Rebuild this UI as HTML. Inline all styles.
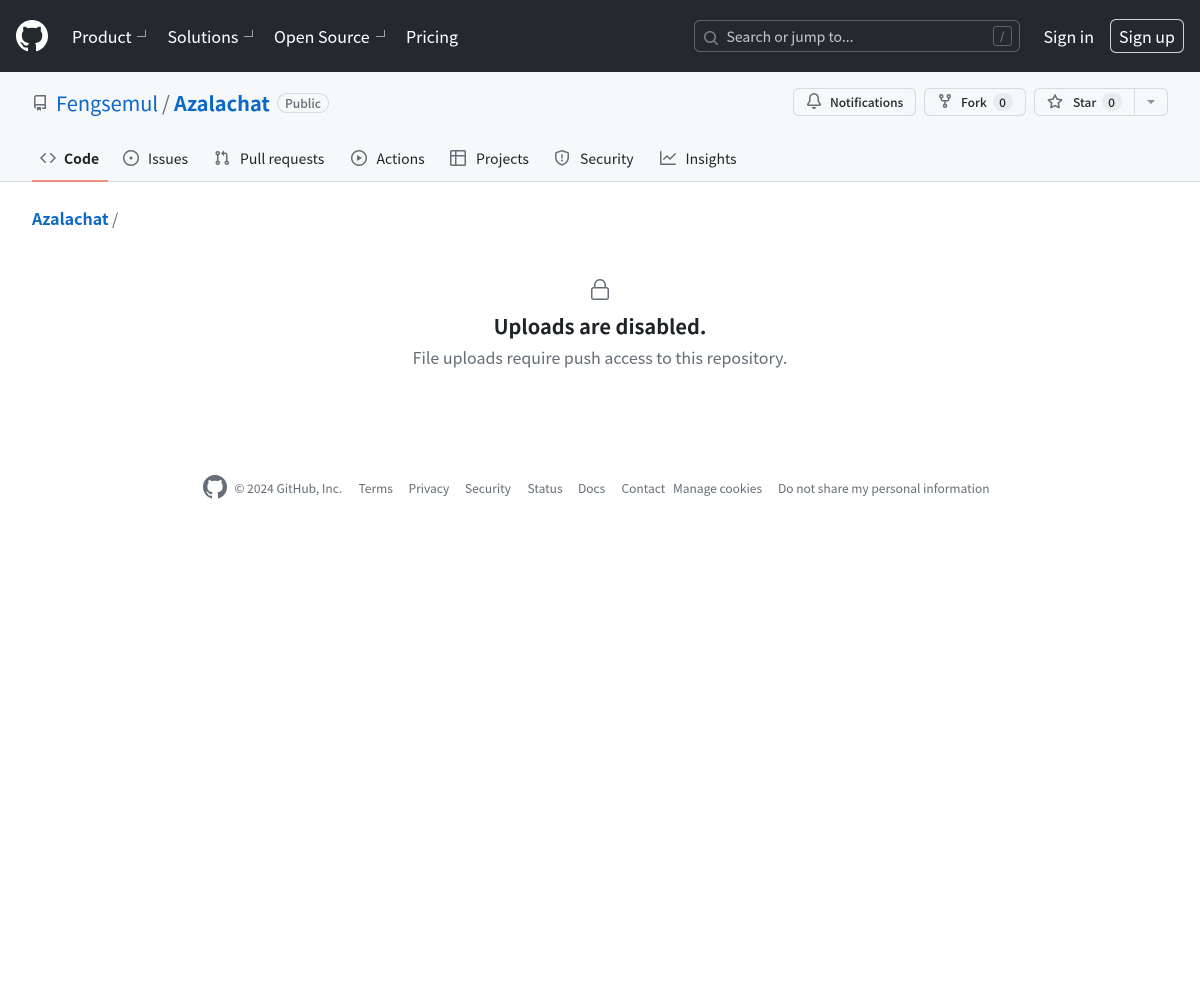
<!DOCTYPE html>
<html lang="en">
<head>
<meta charset="utf-8">
<title>Azalachat</title>
<style>
html,body{margin:0;padding:0;width:1200px;height:1000px;background:#fff;overflow:hidden}
body{font-family:"Noto Sans CJK SC","Noto Sans CJK JP",sans-serif;color:#1f2328;position:relative}
.a{position:absolute;white-space:nowrap;line-height:24px}
svg{position:absolute;fill:currentColor;display:block}
.hd{position:absolute;left:0;top:0;width:1200px;height:72px;background:#24292f}
.sub{position:absolute;left:0;top:72px;width:1200px;height:110px;background:#f6f8fa;border-bottom:1px solid #d8dee4;box-sizing:border-box}
.nav{font-size:16px;color:#fff;top:24px}
.ch{position:absolute;width:8px;height:6px;border-right:1.5px solid #a0a3a6;border-bottom:1.5px solid #a0a3a6;top:30px;box-sizing:content-box}
.tab{font-size:14px;color:#1f2328;top:147px}
.ic{color:#656d76}
.btn{position:absolute;top:88px;height:28px;box-sizing:border-box;background:#f6f8fa;border:1px solid #d5dbe1;border-radius:6px}
.bt{font-size:12px;font-weight:500;color:#24292f;top:91px}
.cnt{position:absolute;top:93px;height:18px;width:20px;border-radius:10px;background:#e9ecef;font-size:12px;line-height:19px;text-align:center;color:#24292f;font-weight:500}
.ft{font-size:12px;color:#656d76;top:477px}
</style>
</head>
<body>
<div class="hd"></div>
<svg style="left:16px;top:20px;color:#fff" width="32" height="32" viewBox="0 0 16 16"><path d="M8 0c4.42 0 8 3.58 8 8a8.013 8.013 0 0 1-5.45 7.59c-.4.08-.55-.17-.55-.38 0-.27.01-1.13.01-2.2 0-.75-.25-1.23-.54-1.48 1.78-.2 3.65-.88 3.65-3.95 0-.88-.31-1.59-.82-2.15.08-.2.36-1.02-.08-2.12 0 0-.67-.22-2.2.82-.64-.18-1.32-.27-2-.27-.68 0-1.36.09-2 .27-1.53-1.03-2.2-.82-2.2-.82-.44 1.1-.16 1.92-.08 2.12-.51.56-.82 1.28-.82 2.15 0 3.06 1.86 3.75 3.64 3.95-.23.2-.44.55-.51 1.07-.46.21-1.61.55-2.33-.66-.15-.24-.6-.83-1.23-.82-.67.01-.27.38.01.53.34.19.73.9.82 1.13.16.45.68 1.31 2.69.94 0 .67.01 1.3.01 1.49 0 .21-.15.45-.55.38A7.995 7.995 0 0 1 0 8c0-4.42 3.58-8 8-8Z"/></svg>
<span class="a nav" style="left:72px">Product</span><i class="ch" style="left:137px"></i>
<span class="a nav" style="left:167.5px">Solutions</span><i class="ch" style="left:244px"></i>
<span class="a nav" style="left:274px">Open Source</span><i class="ch" style="left:376px"></i>
<span class="a nav" style="left:406px">Pricing</span>

<div style="position:absolute;left:694px;top:20px;width:326px;height:32px;box-sizing:border-box;border:1px solid #5f6468;border-radius:6px"></div>
<svg style="left:703px;top:30px;color:#7d8185" width="16" height="16" viewBox="0 0 16 16"><path d="M10.68 11.74a6 6 0 0 1-7.922-8.982 6 6 0 0 1 8.982 7.922l3.04 3.04a.749.749 0 0 1-.326 1.275.749.749 0 0 1-.734-.215ZM11.5 7a4.499 4.499 0 1 0-8.997 0A4.499 4.499 0 0 0 11.5 7Z"/></svg>
<span class="a" style="left:726.5px;top:25px;font-size:14px;color:#c4c6c8">Search or jump to...</span>
<div style="position:absolute;left:993px;top:26px;width:19px;height:20px;box-sizing:border-box;border:1px solid #5f6468;border-radius:3px"></div>
<span class="a" style="left:1000px;top:24px;font-size:11px;color:#8a8e92">/</span>
<span class="a" style="left:1043.5px;top:24px;font-size:16px;color:#fff">Sign in</span>
<div style="position:absolute;left:1110px;top:19px;width:74px;height:34px;box-sizing:border-box;border:1px solid #d0d3d5;border-radius:6px"></div>
<span class="a" style="left:1119px;top:24px;font-size:16px;color:#fff">Sign up</span>

<div class="sub"></div>
<svg class="ic" style="left:32px;top:95px" width="16" height="16" viewBox="0 0 16 16"><path d="M2 2.5A2.5 2.5 0 0 1 4.5 0h8.75a.75.75 0 0 1 .75.75v12.5a.75.75 0 0 1-.75.75h-2.5a.75.75 0 0 1 0-1.5h1.75v-2h-8a1 1 0 0 0-.714 1.7.75.75 0 1 1-1.072 1.05A2.495 2.495 0 0 1 2 11.5Zm10.5-1h-8a1 1 0 0 0-1 1v6.708A2.486 2.486 0 0 1 4.5 9h8ZM5 12.25a.25.25 0 0 1 .25-.25h3.5a.25.25 0 0 1 .25.25v3.25a.25.25 0 0 1-.4.2l-1.45-1.087a.249.249 0 0 0-.3 0L5.4 15.7a.25.25 0 0 1-.4-.2Z"/></svg>
<span class="a" style="left:56px;top:91px;font-size:20px;color:#0b68c8">Fengsemul</span>
<span class="a" style="left:162px;top:91px;font-size:20px;color:#656d76">/</span>
<span class="a" style="left:174px;top:91px;font-size:20px;font-weight:700;color:#0b68c8">Azalachat</span>
<div style="position:absolute;left:277px;top:93px;width:52px;height:20px;box-sizing:border-box;border:1px solid #d5dbe1;border-radius:10px;font-size:12px;font-weight:500;line-height:19px;text-align:center;color:#656d76">Public</div>

<div class="btn" style="left:793px;width:123px"></div>
<svg class="ic" style="left:806px;top:93px" width="16" height="16" viewBox="0 0 16 16"><path d="M8 16a2 2 0 0 0 1.985-1.75c.017-.137-.097-.25-.235-.25h-3.5c-.138 0-.252.113-.235.25A2 2 0 0 0 8 16ZM3 5a5 5 0 0 1 10 0v2.947c0 .05.015.098.042.139l1.703 2.555A1.519 1.519 0 0 1 13.482 13H2.518a1.516 1.516 0 0 1-1.263-2.36l1.703-2.554A.255.255 0 0 0 3 7.947Zm5-3.5A3.5 3.5 0 0 0 4.5 5v2.947c0 .346-.102.683-.294.97l-1.703 2.556a.017.017 0 0 0-.003.01l.001.006c0 .002.002.004.004.006l.006.004.007.001h10.964l.007-.001.006-.004.004-.006.001-.007a.017.017 0 0 0-.003-.01l-1.703-2.554a1.745 1.745 0 0 1-.294-.97V5A3.5 3.5 0 0 0 8 1.5Z"/></svg>
<span class="a bt" style="left:830px">Notifications</span>

<div class="btn" style="left:924px;width:102px"></div>
<svg class="ic" style="left:937px;top:93px" width="16" height="16" viewBox="0 0 16 16"><path d="M5 5.372v.878c0 .414.336.75.75.75h4.5a.75.75 0 0 0 .75-.75v-.878a2.25 2.25 0 1 1 1.5 0v.878a2.25 2.25 0 0 1-2.25 2.25h-1.5v2.128a2.251 2.251 0 1 1-1.5 0V8.5h-1.5A2.25 2.25 0 0 1 3.5 6.25v-.878a2.25 2.25 0 1 1 1.5 0ZM5 3.25a.75.75 0 1 0-1.5 0 .75.75 0 0 0 1.5 0Zm6.75.75a.75.75 0 1 0 0-1.5.75.75 0 0 0 0 1.5Zm-3 8.75a.75.75 0 1 0-1.5 0 .75.75 0 0 0 1.5 0Z"/></svg>
<span class="a bt" style="left:961px">Fork</span>
<span class="cnt" style="left:992.5px">0</span>

<div class="btn" style="left:1034px;width:134px"></div>
<div style="position:absolute;left:1134px;top:88px;width:1px;height:28px;background:#d5dbe1"></div>
<svg class="ic" style="left:1047px;top:94px" width="16" height="16" viewBox="0 0 16 16"><path d="M8 .25a.75.75 0 0 1 .673.418l1.882 3.815 4.21.612a.75.75 0 0 1 .416 1.279l-3.046 2.97.719 4.192a.751.751 0 0 1-1.088.791L8 12.347l-3.766 1.98a.75.75 0 0 1-1.088-.79l.72-4.194L.818 6.374a.75.75 0 0 1 .416-1.28l4.21-.611L7.327.668A.75.75 0 0 1 8 .25Zm0 2.445L6.615 5.5a.75.75 0 0 1-.564.41l-3.097.45 2.24 2.184a.75.75 0 0 1 .216.664l-.528 3.084 2.769-1.456a.75.75 0 0 1 .698 0l2.77 1.456-.53-3.084a.75.75 0 0 1 .216-.664l2.24-2.183-3.096-.45a.75.75 0 0 1-.564-.41L8 2.694Z"/></svg>
<span class="a bt" style="left:1073px">Star</span>
<span class="cnt" style="left:1101.5px">0</span>
<div style="position:absolute;left:1147px;top:100px;width:0;height:0;border-left:4px solid transparent;border-right:4px solid transparent;border-top:4px solid #8b929a"></div>

<svg class="ic" style="left:40px;top:150px" width="16" height="16" viewBox="0 0 16 16"><path d="m11.28 3.22 4.25 4.25a.75.75 0 0 1 0 1.06l-4.25 4.25a.749.749 0 0 1-1.275-.326.749.749 0 0 1 .215-.734L13.94 8l-3.72-3.72a.749.749 0 0 1 .326-1.275.749.749 0 0 1 .734.215Zm-6.56 0a.751.751 0 0 1 1.042.018.751.751 0 0 1 .018 1.042L2.06 8l3.72 3.72a.749.749 0 0 1-.326 1.275.749.749 0 0 1-.734-.215L.47 8.53a.75.75 0 0 1 0-1.06Z"/></svg>
<span class="a tab" style="left:64px;font-weight:700">Code</span>
<div style="position:absolute;left:32px;top:180px;width:75.5px;height:2px;background:#f0907c"></div>

<svg class="ic" style="left:123px;top:150px" width="16" height="16" viewBox="0 0 16 16"><path d="M8 9.5a1.5 1.5 0 1 0 0-3 1.5 1.5 0 0 0 0 3Z"/><path d="M8 0a8 8 0 1 1 0 16A8 8 0 0 1 8 0ZM1.5 8a6.5 6.5 0 1 0 13 0 6.5 6.5 0 0 0-13 0Z"/></svg>
<span class="a tab" style="left:148px">Issues</span>

<svg class="ic" style="left:214px;top:150px" width="16" height="16" viewBox="0 0 16 16"><path d="M1.5 3.25a2.25 2.25 0 1 1 3 2.122v5.256a2.251 2.251 0 1 1-1.5 0V5.372A2.25 2.25 0 0 1 1.5 3.25Zm5.677-.177L9.573.677A.25.25 0 0 1 10 .854V2.5h1A2.5 2.5 0 0 1 13.5 5v5.628a2.251 2.251 0 1 1-1.5 0V5a1 1 0 0 0-1-1h-1v1.646a.25.25 0 0 1-.427.177L7.177 3.427a.25.25 0 0 1 0-.354ZM3.75 2.5a.75.75 0 1 0 0 1.5.75.75 0 0 0 0-1.5Zm0 9.5a.75.75 0 1 0 0 1.5.75.75 0 0 0 0-1.5Zm8.25.75a.75.75 0 1 0 1.5 0 .75.75 0 0 0-1.5 0Z"/></svg>
<span class="a tab" style="left:240px">Pull requests</span>

<svg class="ic" style="left:351px;top:150px" width="16" height="16" viewBox="0 0 16 16"><path d="M8 0a8 8 0 1 1 0 16A8 8 0 0 1 8 0ZM1.5 8a6.5 6.5 0 1 0 13 0 6.5 6.5 0 0 0-13 0Zm4.879-2.773 4.264 2.559a.25.25 0 0 1 0 .428l-4.264 2.559A.25.25 0 0 1 6 10.559V5.442a.25.25 0 0 1 .379-.215Z"/></svg>
<span class="a tab" style="left:376.5px">Actions</span>

<svg class="ic" style="left:450px;top:150px" width="16" height="16" viewBox="0 0 16 16"><path d="M0 1.75C0 .784.784 0 1.75 0h12.5C15.216 0 16 .784 16 1.75v12.5A1.75 1.75 0 0 1 14.25 16H1.75A1.75 1.75 0 0 1 0 14.25ZM6.5 6.5v8h7.75a.25.25 0 0 0 .25-.25V6.5Zm8-1.5V1.75a.25.25 0 0 0-.25-.25H6.5V5Zm-13 1.5v7.75c0 .138.112.25.25.25H5v-8ZM5 5V1.5H1.75a.25.25 0 0 0-.25.25V5Z"/></svg>
<span class="a tab" style="left:476px">Projects</span>

<svg class="ic" style="left:554px;top:150px" width="16" height="16" viewBox="0 0 16 16"><path d="M7.467.133a1.748 1.748 0 0 1 1.066 0l5.25 1.68A1.75 1.75 0 0 1 15 3.48V7c0 1.566-.32 3.182-1.303 4.682-.983 1.498-2.585 2.813-5.032 3.855a1.697 1.697 0 0 1-1.33 0c-2.447-1.042-4.049-2.357-5.032-3.855C1.32 10.182 1 8.566 1 7V3.48a1.75 1.75 0 0 1 1.217-1.667Zm.61 1.429a.25.25 0 0 0-.153 0l-5.25 1.68a.25.25 0 0 0-.174.238V7c0 1.358.275 2.666 1.057 3.86.784 1.194 2.121 2.34 4.366 3.297a.196.196 0 0 0 .154 0c2.245-.956 3.582-2.104 4.366-3.298C13.225 9.666 13.5 8.36 13.5 7V3.48a.251.251 0 0 0-.174-.237l-5.25-1.68ZM8.75 4.75v3a.75.75 0 0 1-1.5 0v-3a.75.75 0 0 1 1.5 0ZM9 10.5a1 1 0 1 1-2 0 1 1 0 0 1 2 0Z"/></svg>
<span class="a tab" style="left:580px">Security</span>

<svg class="ic" style="left:660px;top:150px" width="16" height="16" viewBox="0 0 16 16"><path d="M1.5 1.75V13.5h13.75a.75.75 0 0 1 0 1.5H.75a.75.75 0 0 1-.75-.75V1.75a.75.75 0 0 1 1.5 0Zm14.28 2.53-5.25 5.25a.75.75 0 0 1-1.06 0L7 7.06 4.28 9.78a.751.751 0 0 1-1.042-.018.751.751 0 0 1-.018-1.042l3.25-3.25a.75.75 0 0 1 1.06 0L10 7.94l4.72-4.72a.751.751 0 0 1 1.042.018.751.751 0 0 1 .018 1.042Z"/></svg>
<span class="a tab" style="left:685.5px">Insights</span>

<span class="a" style="left:32px;top:206px;font-size:16px;font-weight:700;color:#0b68c8">Azalachat</span>
<span class="a" style="left:112px;top:206px;font-size:16px;color:#656d76">/</span>

<svg class="ic" style="left:588px;top:278px" width="24" height="24" viewBox="0 0 24 24"><path d="M6 9V7.25C6 3.845 8.503 1 12 1s6 2.845 6 6.25V9h.5a2.5 2.5 0 0 1 2.5 2.5v8a2.5 2.5 0 0 1-2.5 2.5h-13A2.5 2.5 0 0 1 3 19.5v-8A2.5 2.5 0 0 1 5.5 9Zm-1.5 2.5v8a1 1 0 0 0 1 1h13a1 1 0 0 0 1-1v-8a1 1 0 0 0-1-1h-13a1 1 0 0 0-1 1Zm3-4.25V9h9V7.25c0-2.67-1.922-4.75-4.5-4.75-2.578 0-4.5 2.08-4.5 4.75Z"/></svg>
<div class="a" style="left:0;width:1200px;top:314px;text-align:center;font-size:20px;font-weight:700;color:#1f2328">Uploads are disabled.</div>
<div class="a" style="left:0;width:1200px;top:345px;text-align:center;font-size:16px;color:#656d76">File uploads require push access to this repository.</div>

<svg class="ic" style="left:203px;top:475px" width="24" height="24" viewBox="0 0 16 16"><path d="M8 0c4.42 0 8 3.58 8 8a8.013 8.013 0 0 1-5.45 7.59c-.4.08-.55-.17-.55-.38 0-.27.01-1.13.01-2.2 0-.75-.25-1.23-.54-1.48 1.78-.2 3.65-.88 3.65-3.95 0-.88-.31-1.59-.82-2.15.08-.2.36-1.02-.08-2.12 0 0-.67-.22-2.2.82-.64-.18-1.32-.27-2-.27-.68 0-1.36.09-2 .27-1.53-1.03-2.2-.82-2.2-.82-.44 1.1-.16 1.92-.08 2.12-.51.56-.82 1.28-.82 2.15 0 3.06 1.86 3.75 3.64 3.95-.23.2-.44.55-.51 1.07-.46.21-1.61.55-2.33-.66-.15-.24-.6-.83-1.23-.82-.67.01-.27.38.01.53.34.19.73.9.82 1.13.16.45.68 1.31 2.69.94 0 .67.01 1.3.01 1.49 0 .21-.15.45-.55.38A7.995 7.995 0 0 1 0 8c0-4.42 3.58-8 8-8Z"/></svg>
<span class="a ft" style="left:234.5px">© 2024 GitHub, Inc.</span>
<span class="a ft" style="left:358.5px">Terms</span>
<span class="a ft" style="left:408.5px">Privacy</span>
<span class="a ft" style="left:465px">Security</span>
<span class="a ft" style="left:527.5px">Status</span>
<span class="a ft" style="left:578px">Docs</span>
<span class="a ft" style="left:621.5px">Contact</span>
<span class="a ft" style="left:673px">Manage cookies</span>
<span class="a ft" style="left:778px">Do not share my personal information</span>
</body>
</html>
